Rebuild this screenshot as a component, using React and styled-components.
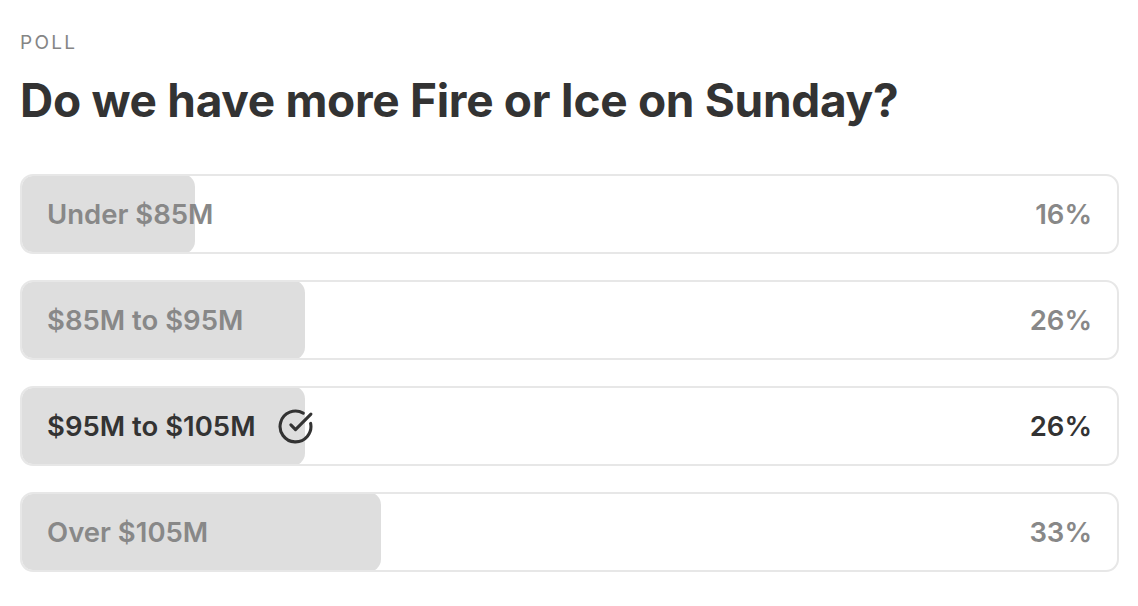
import React from 'react';
import styled, { createGlobalStyle } from 'styled-components';
import { CircleCheckBig } from 'lucide-react';

const GlobalStyle = createGlobalStyle`
  body {
    margin: 0;
    background: #fff;
    font-family: Inter, 'Noto Sans', sans-serif;
  }
`;

const Wrapper = styled.div`
  padding: 31px 19px 20px 20px;
`;

const Eyebrow = styled.div`
  font-size: 19px;
  letter-spacing: 2.3px;
  color: #858585;
  line-height: 24px;
`;

const Question = styled.h1`
  margin: 17px 0 46px;
  font-size: 46px;
  font-weight: 700;
  letter-spacing: -0.3px;
  line-height: 56px;
  color: #333;
`;

const Options = styled.div`
  display: flex;
  flex-direction: column;
  gap: 26px;
`;

const Option = styled.div`
  position: relative;
  height: 80px;
  border: 2px solid #e7e7e7;
  border-radius: 13px;
  overflow: hidden;
  box-sizing: border-box;
`;

const Fill = styled.div`
  position: absolute;
  left: -2px;
  top: -2px;
  bottom: -2px;
  background: #dedede;
  border-radius: 13px;
`;

const Content = styled.div`
  position: relative;
  height: 100%;
  display: flex;
  align-items: center;
  justify-content: space-between;
  padding: 0 25px;
  font-size: 27.5px;
  font-weight: 600;
  color: ${(p) => (p.$selected ? '#333' : '#888')};
`;

const Label = styled.span`
  display: flex;
  align-items: center;
  gap: 21px;
`;

const options = [
  { label: 'Under $85M', pct: 16 },
  { label: '$85M to $95M', pct: 26 },
  { label: '$95M to $105M', pct: 26, selected: true },
  { label: 'Over $105M', pct: 33 },
];

export default function App() {
  return (
    <Wrapper>
      <GlobalStyle />
      <Eyebrow>POLL</Eyebrow>
      <Question>Do we have more Fire or Ice on Sunday?</Question>
      <Options>
        {options.map((o) => (
          <Option key={o.label}>
            <Fill style={{ width: `${o.pct}%` }} />
            <Content $selected={o.selected}>
              <Label>
                {o.label}
                {o.selected && <CircleCheckBig size={37} strokeWidth={2} />}
              </Label>
              <span>{o.pct}%</span>
            </Content>
          </Option>
        ))}
      </Options>
    </Wrapper>
  );
}
